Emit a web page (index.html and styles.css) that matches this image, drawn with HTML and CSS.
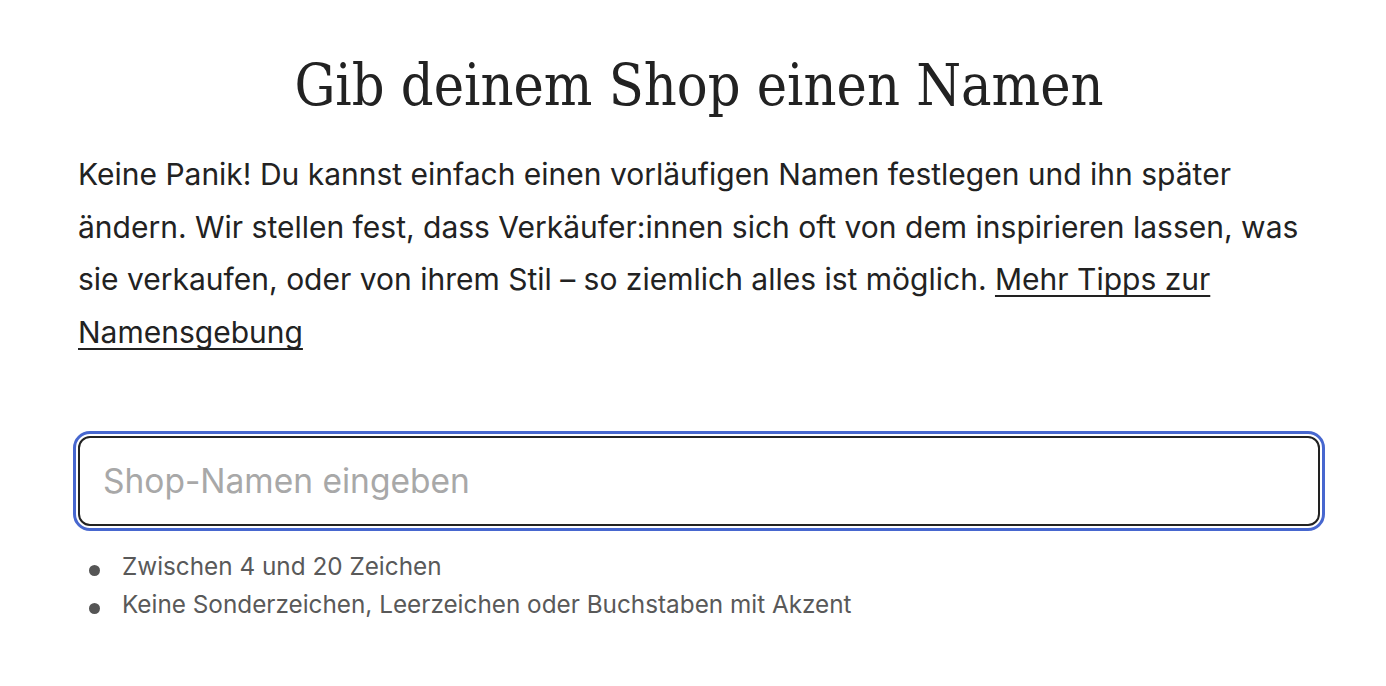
FILE: index.html
```html
<!DOCTYPE html>
<html lang="de">
<head>
<meta charset="utf-8">
<link rel="stylesheet" href="styles.css">
</head>
<body>
<main class="page">
  <h1 class="title">Gib deinem Shop einen Namen</h1>
  <p class="intro">Keine Panik! Du kannst einfach einen vorläufigen Namen festlegen und ihn später ändern. Wir stellen fest, dass Verkäufer:innen sich oft von dem inspirieren lassen, was sie verkaufen, oder von ihrem Stil – so ziemlich alles ist möglich. <a class="link" href="#">Mehr Tipps zur Namensgebung</a></p>
  <div class="field">
    <input class="input" type="text" placeholder="Shop-Namen eingeben">
  </div>
  <ul class="rules">
    <li class="rule">Zwischen 4 und 20 Zeichen</li>
    <li class="rule">Keine Sonderzeichen, Leerzeichen oder Buchstaben mit Akzent</li>
  </ul>
</main>
</body>
</html>
```
FILE: styles.css
```css
* { box-sizing: border-box; }
html, body { margin: 0; padding: 0; background: #fff; }
body { font-family: "Inter", "Liberation Sans", sans-serif; color: #222; }
.page {
  width: 1242px;
  margin-left: 78px;
  padding-top: 50px;
}
.title {
  margin: 0;
  text-align: center;
  font-family: "DejaVu Serif Condensed", "DejaVu Serif", serif;
  font-stretch: condensed;
  font-weight: 300;
  font-size: 57px;
  line-height: 70px;
  color: #222;
}
.intro {
  margin: 28px 0 0;
  font-size: 30px;
  line-height: 52.5px;
  color: #222;
}
.link {
  color: #222;
  text-decoration: underline;
  text-decoration-skip-ink: none;
  text-underline-offset: 5px;
  text-decoration-thickness: 2px;
}
.field {
  margin-top: 78px;
}
.input {
  display: block;
  width: 100%;
  height: 90px;
  border: 2px solid #222;
  border-radius: 12px;
  padding: 0 23px;
  font-family: inherit;
  font-size: 33.5px;
  color: #222;
  outline: 3px solid #4767cf;
  outline-offset: 2px;
  background: #fff;
}
.input::placeholder { color: #a8a8a8; }
.rules {
  list-style: none;
  margin: 21px 0 0;
  padding: 0;
  font-size: 24.3px;
  line-height: 38px;
  color: #595959;
}
.rule {
  display: flex;
  align-items: center;
}
.rule::before {
  content: "";
  width: 11px;
  height: 11px;
  border-radius: 50%;
  background: #555;
  margin: 9px 22px 0 11px;
  flex: none;
}
```
